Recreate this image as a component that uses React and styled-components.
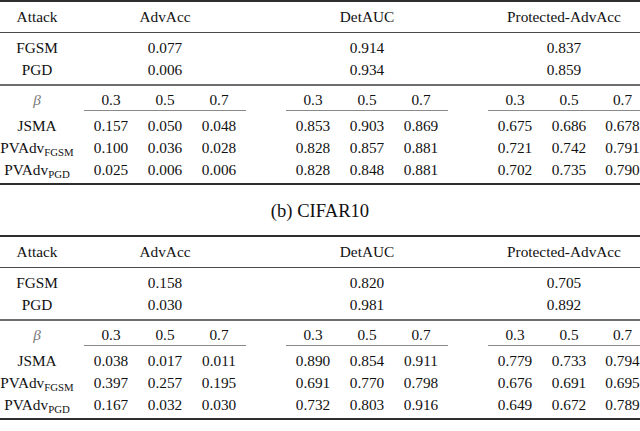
import React from 'react';
import styled, { createGlobalStyle } from 'styled-components';

const COLS = '84px repeat(3, 54px) 40px repeat(3, 54px) 40px 54px 54px 44px';

const GlobalStyle = createGlobalStyle`
  html, body {
    margin: 0;
    padding: 0;
    background: #ffffff;
    overflow: hidden;
  }
`

const Page = styled.div`
  width: 640px;
  font-family: "Liberation Serif", "Times New Roman", serif;
  font-size: 15.3px;
  color: #111111;
`

const Table = styled.div`
  border-top: 2px solid #2e2e2e;
  border-bottom: 2px solid #2e2e2e;
`

const Section = styled.div`
  padding: ${p => p.$pad || '4px 0 3px'};
  border-bottom: ${p => p.$rule || 'none'};
`

const Row = styled.div`
  display: grid;
  grid-template-columns: ${COLS};
  grid-auto-rows: 22px;
  line-height: 22px;
`

const Cell = styled.div`
  grid-column: span ${p => p.$span || 1};
  text-align: center;
  white-space: nowrap;
  padding: ${p => (p.$last ? '0 0 0 9px' : '0')};
  ${p => p.$span > 1 && p.$last && 'padding: 0;'}
  border-bottom: ${p => (p.$rule ? '1px solid #8a8a8a' : 'none')};
  padding-bottom: ${p => (p.$rule ? '4px' : '0')};
`

const LabelCell = styled.div`
  text-align: center;
  white-space: nowrap;
  padding-right: 10px;
`

const Beta = styled.span`
  font-style: italic;
  color: #7a7a7a;
`

const Sub = styled.span`
  font-size: 10.8px;
  vertical-align: -3px;
  line-height: 0;
`

const Caption = styled.div`
  margin: 14px 0 12px;
  height: 24px;
  line-height: 24px;
  text-align: center;
  font-size: 18.6px;
`

const headers = ['AdvAcc', 'DetAUC', 'Protected-AdvAcc'];
const betas = ['0.3', '0.5', '0.7'];

const tables = [
  {
    single: [
      { name: 'FGSM', values: ['0.077', '0.914', '0.837'] },
      { name: 'PGD', values: ['0.006', '0.934', '0.859'] },
    ],
    beta: [
      { name: 'JSMA', values: [['0.157', '0.050', '0.048'], ['0.853', '0.903', '0.869'], ['0.675', '0.686', '0.678']] },
      { name: 'PVAdv', sub: 'FGSM', values: [['0.100', '0.036', '0.028'], ['0.828', '0.857', '0.881'], ['0.721', '0.742', '0.791']] },
      { name: 'PVAdv', sub: 'PGD', values: [['0.025', '0.006', '0.006'], ['0.828', '0.848', '0.881'], ['0.702', '0.735', '0.790']] },
    ],
  },
  {
    single: [
      { name: 'FGSM', values: ['0.158', '0.820', '0.705'] },
      { name: 'PGD', values: ['0.030', '0.981', '0.892'] },
    ],
    beta: [
      { name: 'JSMA', values: [['0.038', '0.017', '0.011'], ['0.890', '0.854', '0.911'], ['0.779', '0.733', '0.794']] },
      { name: 'PVAdv', sub: 'FGSM', values: [['0.397', '0.257', '0.195'], ['0.691', '0.770', '0.798'], ['0.676', '0.691', '0.695']] },
      { name: 'PVAdv', sub: 'PGD', values: [['0.167', '0.032', '0.030'], ['0.732', '0.803', '0.916'], ['0.649', '0.672', '0.789']] },
    ],
  },
];

// one cell spanning each group, spacer columns in between
const SpanRow = ({ label, values }) => (
  <Row>
    <LabelCell>{label}</LabelCell>
    {values.map((v, g) => (
      <React.Fragment key={g}>
        <Cell $span={3} $last={g === 2}>{v}</Cell>
        {g < 2 && <div />}
      </React.Fragment>
    ))}
  </Row>
)

// three cells per group
const TripleRow = ({ label, groups, rule }) => (
  <Row>
    <LabelCell>{label}</LabelCell>
    {groups.map((vals, g) => (
      <React.Fragment key={g}>
        {vals.map((v, i) => (
          <Cell key={i} $rule={rule} $last={g === 2 && i === 2}>{v}</Cell>
        ))}
        {g < 2 && <div />}
      </React.Fragment>
    ))}
  </Row>
)

const ResultTable = ({ data }) => (
  <Table>
    <Section $pad="4px 0" $rule="1px solid #4a4a4a">
      <SpanRow label="Attack" values={headers} />
    </Section>
    <Section $pad="4px 0 3px" $rule="2px solid #6e6e6e">
      {data.single.map(r => (
        <SpanRow key={r.name} label={r.name} values={r.values} />
      ))}
    </Section>
    <Section $pad="3px 0 0">
      <TripleRow label={<Beta>β</Beta>} groups={[betas, betas, betas]} rule />
    </Section>
    <Section $pad="4px 0 2px">
      {data.beta.map(r => (
        <TripleRow
          key={r.name + (r.sub || '')}
          label={<>{r.name}{r.sub && <Sub>{r.sub}</Sub>}</>}
          groups={r.values}
        />
      ))}
    </Section>
  </Table>
)

export default function App() {
  return (
    <Page>
      <GlobalStyle />
      <ResultTable data={tables[0]} />
      <Caption>(b) CIFAR10</Caption>
      <ResultTable data={tables[1]} />
    </Page>
  );
}
